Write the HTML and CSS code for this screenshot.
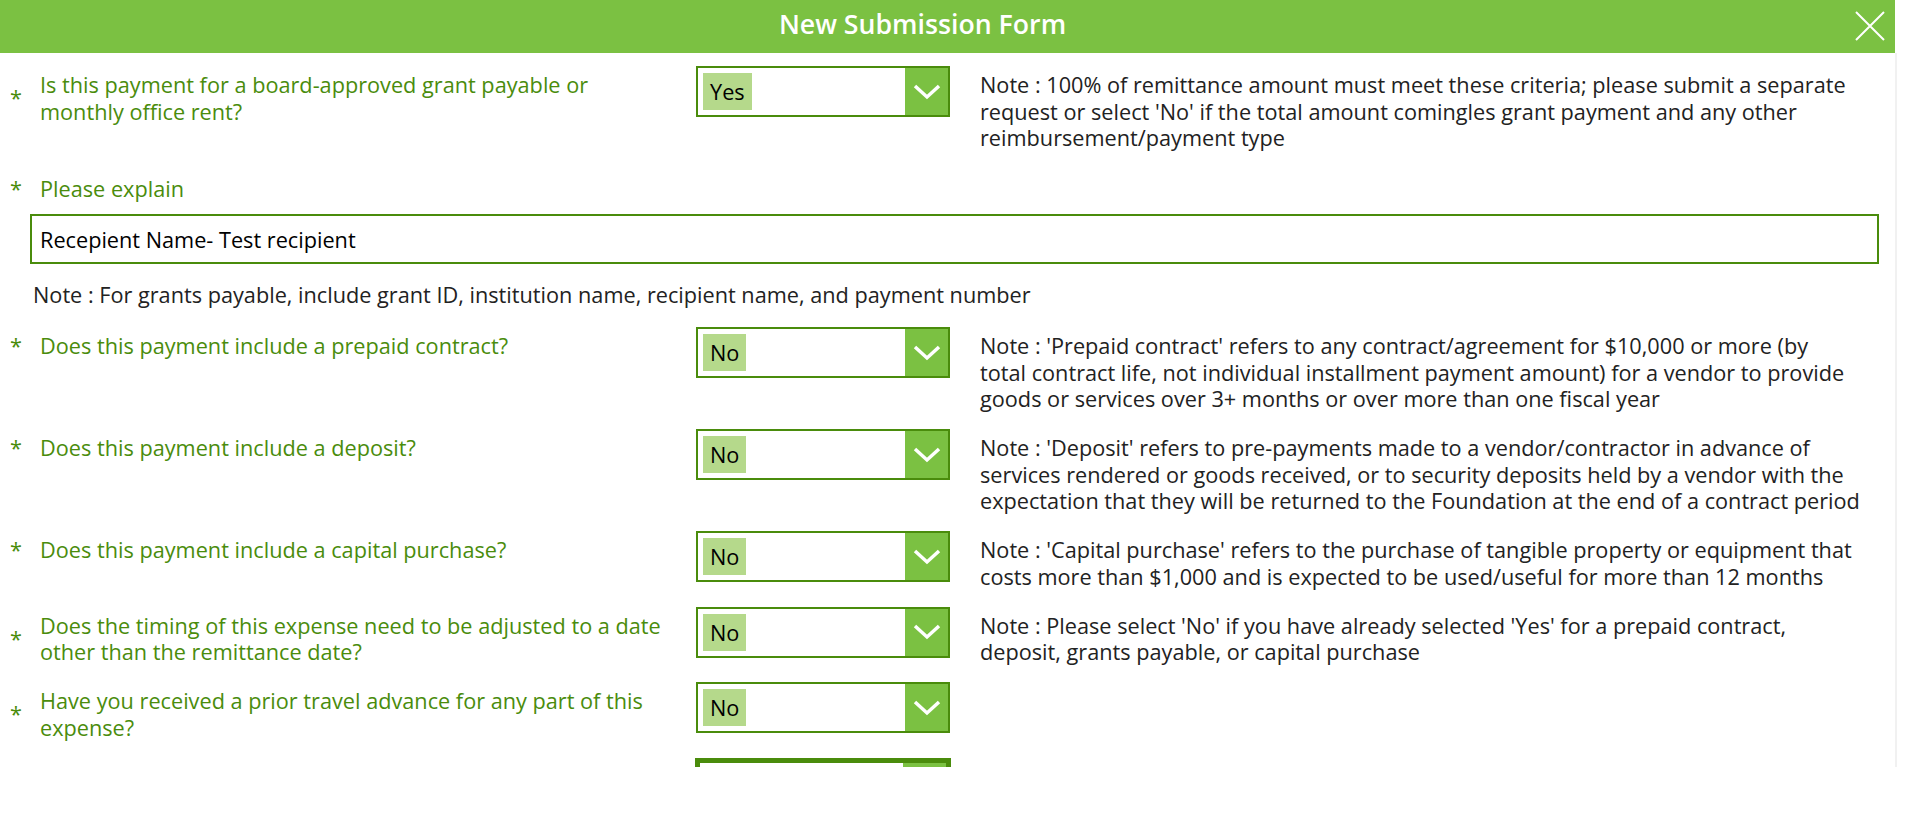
FILE: index.html
```html
<!DOCTYPE html>
<html lang="en">
<head>
  <meta charset="UTF-8" />
  <meta name="viewport" content="width=device-width, initial-scale=1.0" />
  <title>New Submission Form</title>
  <link rel="stylesheet" href="styles.css">
</head>
<body>

  <div class="app">
    <header class="title-bar">
      <div class="title">New Submission Form</div>
      <button class="close" aria-label="Close">
        <svg width="30" height="30" viewBox="0 0 30 30">
          <path d="M1 1 L29 29 M29 1 L1 29" stroke="#fff" stroke-width="2" fill="none" />
        </svg>
      </button>
    </header>

    <div class="form-body">

      <div class="row">
        <div class="question">
          <span class="star">*</span>
          <span class="label">Is this payment for a board-approved grant payable or monthly office rent?</span>
        </div>
        <div class="dropdown">
          <span class="value">Yes</span>
          <span class="chevron"><svg width="28" height="16" viewBox="0 0 28 16"><path d="M2 2 L14 13 L26 2" /></svg></span>
        </div>
        <div class="note">Note : 100% of remittance amount must meet these criteria; please submit a separate request or select 'No' if the total amount comingles grant payment and any other reimbursement/payment type</div>
      </div>

      <div class="explain">
        <div class="question">
          <span class="star">*</span>
          <span class="label">Please explain</span>
        </div>
        <div class="textbox">Recepient Name- Test recipient</div>
        <div class="explain-note">Note : For grants payable, include grant ID, institution name, recipient name, and payment number</div>
      </div>

      <div class="row">
        <div class="question">
          <span class="star">*</span>
          <span class="label">Does this payment include a prepaid contract?</span>
        </div>
        <div class="dropdown">
          <span class="value">No</span>
          <span class="chevron"><svg width="28" height="16" viewBox="0 0 28 16"><path d="M2 2 L14 13 L26 2" /></svg></span>
        </div>
        <div class="note">Note : 'Prepaid contract' refers to any contract/agreement for $10,000 or more (by<br>total contract life, not individual installment payment amount) for a vendor to provide goods or services over 3+ months or over more than one fiscal year</div>
      </div>

      <div class="row">
        <div class="question">
          <span class="star">*</span>
          <span class="label">Does this payment include a deposit?</span>
        </div>
        <div class="dropdown">
          <span class="value">No</span>
          <span class="chevron"><svg width="28" height="16" viewBox="0 0 28 16"><path d="M2 2 L14 13 L26 2" /></svg></span>
        </div>
        <div class="note">Note : 'Deposit' refers to pre-payments made to a vendor/contractor in advance of services rendered or goods received, or to security deposits held by a vendor with the expectation that they will be returned to the Foundation at the end of a contract period</div>
      </div>

      <div class="row">
        <div class="question">
          <span class="star">*</span>
          <span class="label">Does this payment include a capital purchase?</span>
        </div>
        <div class="dropdown">
          <span class="value">No</span>
          <span class="chevron"><svg width="28" height="16" viewBox="0 0 28 16"><path d="M2 2 L14 13 L26 2" /></svg></span>
        </div>
        <div class="note">Note : 'Capital purchase' refers to the purchase of tangible property or equipment that costs more than $1,000 and is expected to be used/useful for more than 12 months</div>
      </div>

      <div class="row">
        <div class="question">
          <span class="star">*</span>
          <span class="label">Does the timing of this expense need to be adjusted to a date other than the remittance date?</span>
        </div>
        <div class="dropdown">
          <span class="value">No</span>
          <span class="chevron"><svg width="28" height="16" viewBox="0 0 28 16"><path d="M2 2 L14 13 L26 2" /></svg></span>
        </div>
        <div class="note">Note : Please select 'No' if you have already selected 'Yes' for a prepaid contract, deposit, grants payable, or capital purchase</div>
      </div>

      <div class="row">
        <div class="question">
          <span class="star">*</span>
          <span class="label">Have you received a prior travel advance for any part of this expense?</span>
        </div>
        <div class="dropdown">
          <span class="value">No</span>
          <span class="chevron"><svg width="28" height="16" viewBox="0 0 28 16"><path d="M2 2 L14 13 L26 2" /></svg></span>
        </div>
        <div class="note"></div>
      </div>

      <div class="row">
        <div class="spacer"></div>
        <div class="dropdown focused">
          <span class="value value-empty"></span>
          <span class="chevron"><svg width="28" height="16" viewBox="0 0 28 16"><path d="M2 2 L14 13 L26 2" /></svg></span>
        </div>
      </div>

    </div>
  </div>

</body>
</html>
```

FILE: styles.css
```css
html, body {
  margin: 0;
  padding: 0;
  background: #fff;
  font-family: "Open Sans", "Liberation Sans", sans-serif;
}

.app {
  width: 1897px;
}

.title-bar {
  width: 1895px;
  height: 53px;
  background-color: #7bc142;
  display: flex;
  align-items: center;
  padding-bottom: 6px;
  box-sizing: border-box;
}

.title {
  flex: 1;
  text-align: center;
  color: #fff;
  font-size: 26.7px;
  font-weight: 600;
}

.close {
  width: 50px;
  height: 40px;
  padding: 0;
  margin-top: 4px;
  border: none;
  background: transparent;
  display: flex;
  align-items: center;
  justify-content: center;
}

.form-body {
  height: 714px;
  overflow: hidden;
  padding-top: 13px;
  box-sizing: border-box;
  border-right: 2px solid #f1f1f1;
}

.row {
  display: flex;
  align-items: flex-start;
  margin-bottom: 16.5px;
}

.question {
  display: flex;
  align-items: center;
  margin-top: 6px;
}

.spacer {
  width: 696px;
}

.star {
  width: 30px;
  padding-left: 10px;
  color: #4a8c0c;
  font-size: 21.7px;
  line-height: 26.5px;
}

.label {
  width: 624px;
  margin-right: 32px;
  color: #4a8c0c;
  font-size: 21.7px;
  line-height: 26.5px;
}

.dropdown {
  width: 254px;
  height: 51px;
  border: 2px solid #4a8c0c;
  box-sizing: border-box;
  display: flex;
  align-items: stretch;
  flex: 0 0 auto;
}

.dropdown.focused {
  width: 256px;
  height: 55px;
  margin-left: -1px;
  border-width: 5px;
}

.value {
  margin: 5px auto 5px 5px;
  padding: 0 7px;
  background-color: #b5d98b;
  color: #000;
  font-size: 21.7px;
  display: flex;
  align-items: center;
}

.value-empty {
  width: 30px;
  padding: 0;
}

.chevron {
  width: 43px;
  background-color: #7bc142;
  display: flex;
  align-items: center;
  justify-content: center;
}

.chevron path {
  fill: none;
  stroke: #fff;
  stroke-width: 3.5;
}

.note {
  width: 882px;
  margin-left: 30px;
  margin-top: 6px;
  color: #222;
  font-size: 21.7px;
  line-height: 26.5px;
}

.explain {
  padding-top: 1.5px;
  margin-bottom: 18.5px;
}

.textbox {
  width: 1849px;
  height: 50px;
  margin: 12px 0 0 30px;
  padding-left: 8px;
  border: 2px solid #4a8c0c;
  box-sizing: border-box;
  display: flex;
  align-items: center;
  color: #000;
  font-size: 21.7px;
}

.explain-note {
  margin: 18px 0 0 33px;
  color: #222;
  font-size: 21.7px;
  line-height: 26.5px;
}
```
